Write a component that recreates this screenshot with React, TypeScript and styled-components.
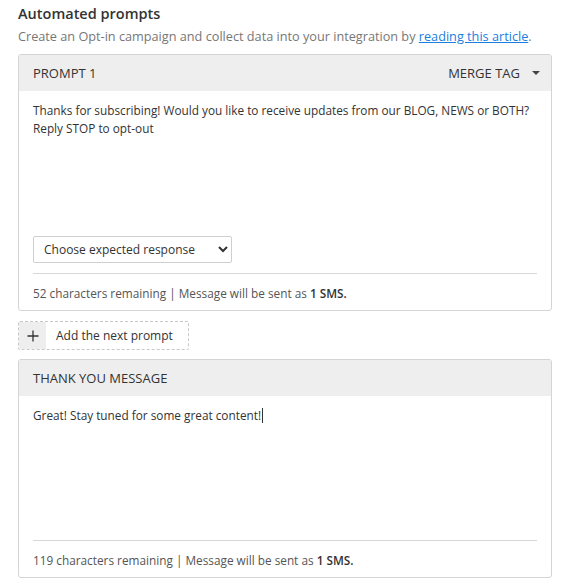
import React from 'react';
import styled, { createGlobalStyle } from 'styled-components';

const GlobalStyle = createGlobalStyle`
  body {
    margin: 0;
    background: #ffffff;
    font-family: "Open Sans", "Noto Sans", sans-serif;
    color: #333333;
  }
`;

const Page = styled.div`
  padding: 3px 18px 10px 18px;
  width: 534px;
`;

const Title = styled.h3`
  margin: 0;
  font-size: 14.5px;
  font-weight: 600;
  line-height: 22px;
  color: #333;
`;

const Intro = styled.p`
  margin: 0 0 7px 0;
  font-size: 12.7px;
  line-height: 22px;
  color: #777;

  a {
    color: #1a7fe0;
    text-decoration: underline;
  }
`;

const Card = styled.section`
  border: 1px solid #d4d4d4;
  border-radius: 3px;
  background: #fff;
  overflow: hidden;
`;

const CardHeader = styled.div`
  height: 36px;
  display: flex;
  align-items: center;
  justify-content: space-between;
  padding: 0 11px 0 14px;
  background: #eeeeee;
  font-size: 13px;
  font-weight: 500;
  color: #333;
`;

const MergeTag = styled.button`
  display: flex;
  align-items: center;
  gap: 12px;
  border: 0;
  background: none;
  padding: 0;
  font: inherit;
  color: inherit;
  cursor: pointer;
`;

const Caret = styled.span`
  width: 0;
  height: 0;
  border-left: 4px solid transparent;
  border-right: 4px solid transparent;
  border-top: 4px solid #444;
`;

const CardBody = styled.div`
  padding: 10px 14px 0 14px;
`;

const Message = styled.div<{ $height: number }>`
  min-height: ${(p) => p.$height}px;
  margin-right: -8px;
  font-size: 11.8px;
  line-height: 18px;
  color: #333;
`;

const Cursor = styled.span`
  display: inline-block;
  width: 1px;
  height: 15px;
  margin-left: 1px;
  vertical-align: -3px;
  background: #333;
`;

const Select = styled.select`
  width: 199px;
  height: 27px;
  padding: 0 6px;
  border: 1px solid #cfcfcf;
  border-radius: 2px;
  background: #fff;
  font-family: "Open Sans", "Noto Sans", sans-serif;
  font-size: 12px;
  color: #333;
`;

const Divider = styled.hr`
  margin: 10px 0 0 0;
  border: 0;
  border-top: 1px solid #d8d8d8;
`;

const Counter = styled.div`
  padding: 10px 0 8px 0;
  font-size: 11.8px;
  line-height: 18px;
  color: #555;

  b {
    font-weight: 600;
    color: #333;
  }
`;

const AddButton = styled.button`
  display: flex;
  align-items: stretch;
  margin: 10px 0 9px 0;
  padding: 0;
  width: 171px;
  height: 29px;
  border: 1px dashed #c8c8c8;
  border-radius: 2px;
  background: #fff;
  font-family: "Open Sans", "Noto Sans", sans-serif;
  font-size: 12px;
  color: #333;
  cursor: pointer;
`;

const PlusBox = styled.span`
  width: 27px;
  display: flex;
  align-items: center;
  justify-content: center;
  background: #eeeeee;
`;

const AddLabel = styled.span`
  display: flex;
  align-items: center;
  padding-left: 10px;
`;

const PlusIcon = () => (
  <svg width="12" height="12" viewBox="0 0 12 12">
    <path d="M6 0.5v11M0.5 6h11" stroke="#333" strokeWidth="1.3" fill="none" />
  </svg>
);

const App = () => {
  return (
    <>
      <GlobalStyle />
      <Page>
        <Title>Automated prompts</Title>
        <Intro>
          Create an Opt-in campaign and collect data into your integration by{' '}
          <a href="#">reading this article</a>.
        </Intro>

        <Card>
          <CardHeader>
            <span>PROMPT 1</span>
            <MergeTag>
              MERGE TAG <Caret />
            </MergeTag>
          </CardHeader>
          <CardBody>
            <Message $height={135}>
              Thanks for subscribing! Would you like to receive updates from our BLOG, NEWS or BOTH?
              <br />
              Reply STOP to opt-out
            </Message>
            <Select defaultValue="">
              <option value="">Choose expected response</option>
            </Select>
            <Divider />
            <Counter>
              52 characters remaining | Message will be sent as <b>1 SMS.</b>
            </Counter>
          </CardBody>
        </Card>

        <AddButton>
          <PlusBox>
            <PlusIcon />
          </PlusBox>
          <AddLabel>Add the next prompt</AddLabel>
        </AddButton>

        <Card>
          <CardHeader>
            <span>THANK YOU MESSAGE</span>
          </CardHeader>
          <CardBody>
            <Message $height={124}>
              Great! Stay tuned for some great content!
              <Cursor />
            </Message>
            <Divider />
            <Counter>
              119 characters remaining | Message will be sent as <b>1 SMS.</b>
            </Counter>
          </CardBody>
        </Card>
      </Page>
    </>
  );
};

export default App;
